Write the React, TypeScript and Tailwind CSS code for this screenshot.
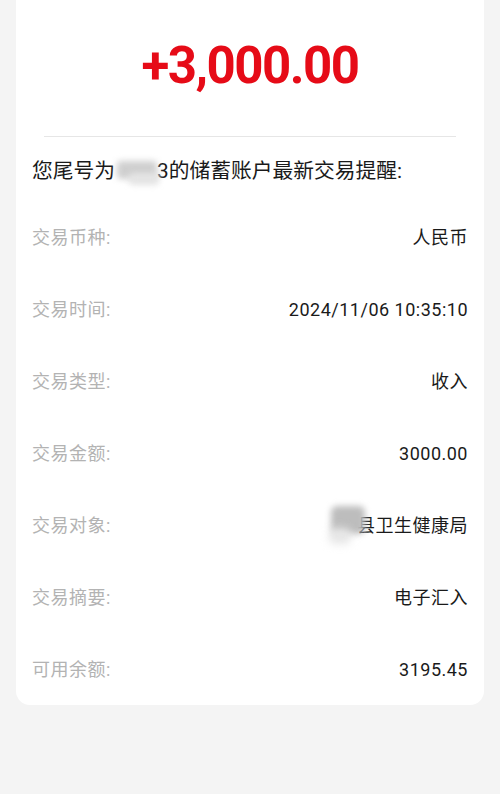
export default function App() {
  const rows: [string, React.ReactNode][] = [
    ["交易币种:", "人民币"],
    ["交易时间:", "2024/11/06 10:35:10"],
    ["交易类型:", "收入"],
    ["交易金额:", "3000.00"],
    [
      "交易对象:",
      <span className="relative inline-flex items-center">
        <span className="relative">
          县
          <span className="absolute left-[-26px] top-[-6px] w-[34px] h-[28px] rounded-md bg-[#bdbdbd] blur-[3px]" />
          <span className="absolute left-[-28px] top-[16px] w-[22px] h-[16px] rounded-md bg-[#e6e6e6] blur-[4px]" />
        </span>
        卫生健康局
      </span>,
    ],
    ["交易摘要:", "电子汇入"],
    ["可用余额:", "3195.45"],
  ];
  return (
    <div
      className="min-h-[794px] w-[500px] bg-[#f4f4f4]"
      style={{ fontFamily: 'Roboto, "Noto Sans CJK SC", sans-serif' }}
    >
      <div className="mx-4 bg-white rounded-b-[14px] px-4">
        <div className="h-[136px] flex flex-col">
          <div className="flex-1 flex items-center justify-center pb-[6px]">
            <span className="text-[51px] leading-none font-bold text-[#e60b17] tracking-[-1.5px]">
              +3,000.00
            </span>
          </div>
        </div>
        <div className="mx-3 h-px bg-[#e6e6e6]" />
        <div className="pt-[20px] text-[20.75px] leading-[28px] text-[#1a1a1a] flex items-center">
          <span>您尾号为</span>
          <span className="relative inline-block w-[42px] h-[28px]">
            <span className="absolute left-[2px] top-[4px] w-[40px] h-[18px] rounded bg-[#cfcfcf] blur-[3px]" />
            <span className="absolute left-[14px] top-[16px] w-[30px] h-[12px] rounded bg-[#e4e4e4] blur-[3px]" />
          </span>
          <span>3的储蓄账户最新交易提醒:</span>
        </div>
        <div className="mt-4">
          {rows.map(([label, value], i) => (
            <div key={i} className="h-[72px] flex items-center justify-between text-[18px]">
              <span className="text-[#b3b3b3] tracking-[0.5px]">{label}</span>
              <span className="text-[#1a1a1a] tracking-[0.5px]">{value}</span>
            </div>
          ))}
        </div>
      </div>
    </div>
  );
}
